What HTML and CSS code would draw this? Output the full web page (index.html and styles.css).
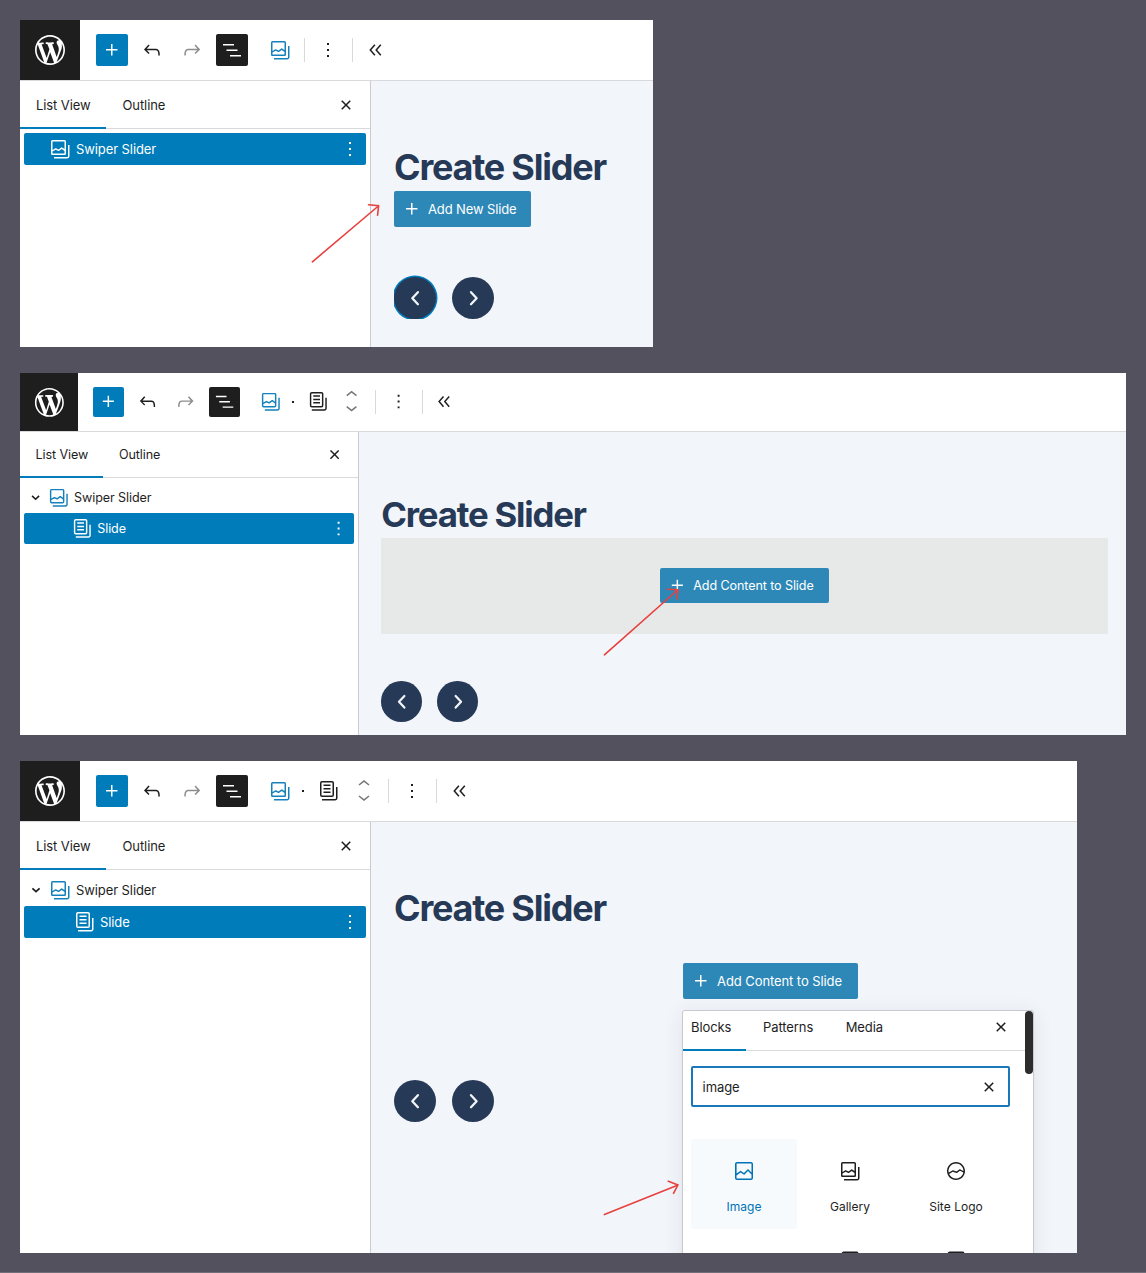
FILE: index.html
```html
<!DOCTYPE html>
<html lang="en">
<head>
<meta charset="utf-8">
<title>Swiper Slider block</title>
<link rel="stylesheet" href="styles.css">
</head>
<body>
<svg class="sprite" aria-hidden="true">
  <symbol id="wordpress" viewBox="-2 -2 24 24"><path d="M20 10c0-5.51-4.49-10-10-10C4.48 0 0 4.49 0 10c0 5.52 4.48 10 10 10 5.51 0 10-4.48 10-10zM7.78 15.37L4.37 6.22c.55-.02 1.17-.08 1.17-.08.5-.06.44-1.13-.06-1.11 0 0-1.45.11-2.37.11-.18 0-.37 0-.58-.01C4.12 2.69 6.87 1.11 10 1.11c2.33 0 4.45.87 6.05 2.34-.68-.11-1.65.39-1.65 1.58 0 .74.45 1.36.9 2.1.35.61.55 1.36.55 2.46 0 1.49-1.4 5-1.4 5l-3.03-8.37c.54-.02.82-.17.82-.17.5-.05.44-1.25-.06-1.22 0 0-1.44.12-2.38.12-.87 0-2.33-.12-2.33-.12-.5-.03-.56 1.2-.06 1.22l.92.08 1.26 3.41zM17.41 10c.24-.64.74-1.87.43-4.25.7 1.29 1.05 2.71 1.05 4.25 0 3.29-1.73 6.24-4.4 7.78.97-2.59 1.94-5.2 2.92-7.78zM6.1 18.09C3.12 16.65 1.11 13.53 1.11 10c0-1.3.23-2.48.72-3.59C3.25 10.3 4.67 14.2 6.1 18.09zm4.03-6.63l2.58 6.98c-.86.29-1.76.45-2.71.45-.79 0-1.57-.11-2.29-.33.81-2.38 1.62-4.74 2.42-7.1z"/></symbol>
  <symbol id="plus" viewBox="0 0 24 24"><path d="M11 12.5V17.5H12.5V12.5H17.5V11H12.5V6H11V11H6V12.5H11Z"/></symbol>
  <symbol id="undo" viewBox="0 0 24 24"><path d="M18.3 11.7c-.6-.6-1.4-.9-2.3-.9H6.7l2.9-3.3-1.1-1-4.5 5L8.5 16l1-1-2.7-2.7H16c.5 0 .9.2 1.3.5 1 1 1 3.4 1 4.5v.3h1.5v-.2c0-1.5 0-4.3-1.5-5.7z"/></symbol>
  <symbol id="redo" viewBox="0 0 24 24"><path d="M15.6 6.5l-1.1 1 2.9 3.3H8c-.9 0-1.7.3-2.3.9-1.4 1.5-1.4 4.2-1.4 5.6v.2h1.5v-.3c0-1.1 0-3.5 1-4.5.3-.3.7-.5 1.3-.5h9.2L14.5 15l1.1 1.1 4.6-4.6-4.6-5z"/></symbol>
  <symbol id="list-view" viewBox="0 0 24 24"><path d="M3 6h11v1.5H3V6Zm3.5 5.5h11V13h-11v-1.5ZM21 17H10v1.5h11V17Z"/></symbol>
  <symbol id="gallery" viewBox="0 0 24 24"><path fill-rule="evenodd" d="M16.375 4.5H4.625a.125.125 0 0 0-.125.125v8.254l2.859-1.54a.75.75 0 0 1 .68-.016l2.384 1.142 2.89-2.074a.75.75 0 0 1 .874 0l2.313 1.66V4.625a.125.125 0 0 0-.125-.125Zm.125 9.398-2.75-1.975-2.813 2.02a.75.75 0 0 1-.76.067l-2.444-1.17L4.5 14.583v1.792c0 .069.056.125.125.125h11.75a.125.125 0 0 0 .125-.125v-2.477ZM4.625 3C3.728 3 3 3.728 3 4.625v11.75C3 17.273 3.728 18 4.625 18h11.75c.898 0 1.625-.727 1.625-1.625V4.625C18 3.728 17.273 3 16.375 3H4.625ZM20 8v11c0 .69-.31 1-.999 1H6v1.5h13.001c1.52 0 2.499-.982 2.499-2.5V8H20Z"/></symbol>
  <symbol id="pages" viewBox="0 0 24 24"><path d="M14.5 5.5h-7V7h7V5.5ZM7.5 9h7v1.5h-7V9Zm7 3.5h-7V14h7v-1.5Z"/><path d="M16 2H6a2 2 0 0 0-2 2v12a2 2 0 0 0 2 2h10a2 2 0 0 0 2-2V4a2 2 0 0 0-2-2ZM6 3.5h10a.5.5 0 0 1 .5.5v12a.5.5 0 0 1-.5.5H6a.5.5 0 0 1-.5-.5V4a.5.5 0 0 1 .5-.5Z" fill-rule="evenodd"/><path d="M20 8v11c0 .69-.31 1-.999 1H6v1.5h13.001c1.52 0 2.499-.982 2.499-2.5V8H20Z"/></symbol>
  <symbol id="more" viewBox="0 0 24 24"><path d="M13 19h-2v-2h2v2zm0-6h-2v-2h2v2zm0-6h-2V5h2v2z"/></symbol>
  <symbol id="collapse" viewBox="0 0 24 24"><path d="M10.9 6.7 6.3 12l4.6 5.3M16.8 6.7 12.2 12l4.6 5.3" fill="none" stroke="currentColor" stroke-width="1.5"/></symbol>
  <symbol id="chevron-up" viewBox="0 0 24 24"><path d="M6.5 12.4L12 8l5.5 4.4-.9 1.2L12 10l-4.5 3.6-1-1.2z"/></symbol>
  <symbol id="chevron-down" viewBox="0 0 24 24"><path d="M17.5 11.6L12 16l-5.5-4.4.9-1.2L12 14l4.5-3.6 1 1.2z"/></symbol>
  <symbol id="close" viewBox="0 0 24 24"><path d="M12 13.06l3.712 3.713 1.061-1.06L13.061 12l3.712-3.712-1.06-1.06L12 10.938 8.288 7.227l-1.061 1.06L10.939 12l-3.712 3.712 1.06 1.061L12 13.061z"/></symbol>
  <symbol id="expanded" viewBox="0 0 24 24"><path d="m8.4 10.3 3.6 3.4 3.6-3.4" fill="none" stroke="currentColor" stroke-width="1.7"/></symbol>
  <symbol id="image" viewBox="0 0 24 24"><path d="M19 3H5c-1.1 0-2 .9-2 2v14c0 1.1.9 2 2 2h14c1.1 0 2-.9 2-2V5c0-1.1-.9-2-2-2zM5 4.5h14c.3 0 .5.2.5.5v8.4l-3-2.9c-.3-.3-.8-.3-1 0L11.9 14 9 12c-.3-.2-.6-.2-.8 0l-3.6 2.6V5c-.1-.3.1-.5.4-.5zm14 15H5c-.3 0-.5-.2-.5-.5v-2.4l4.1-3 3 1.9c.3.2.7.2.9-.1L16 12l3.5 3.4V19c0 .3-.2.5-.5.5z"/></symbol>
  <symbol id="site-logo" viewBox="0 0 24 24"><path d="M12 3c-5 0-9 4-9 9s4 9 9 9 9-4 9-9-4-9-9-9zm0 1.5c4.1 0 7.5 3.4 7.5 7.5v.1c-1.4-.8-3.3-1.7-3.4-1.8-.2-.1-.5-.1-.8.1l-2.9 2.1L9 11.3c-.2-.1-.4 0-.6.1l-3.7 2.2c-.1-.5-.2-1-.2-1.5 0-4.2 3.4-7.6 7.5-7.6zm0 15c-3.1 0-5.7-1.9-6.9-4.5l3.7-2.2 3.5 1.2c.2.1.5 0 .7-.1l2.9-2.1c.8.4 2.5 1.2 3.5 1.9-.9 3.3-3.9 5.8-7.4 5.8z"/></symbol>
  <symbol id="frame" viewBox="0 0 24 24"><rect x="4.2" y="3.3" width="15.6" height="17" rx="1.5" fill="none" stroke="currentColor" stroke-width="1.5"/></symbol>
  <symbol id="prev" viewBox="0 0 24 24"><path d="M14.9 6.2 9.3 12.2l5.6 6" fill="none" stroke="currentColor" stroke-width="2.3" stroke-linecap="round" stroke-linejoin="round"/></symbol>
  <symbol id="next" viewBox="0 0 24 24"><path d="M10 6.2l5.6 6-5.6 6" fill="none" stroke="currentColor" stroke-width="2.3" stroke-linecap="round" stroke-linejoin="round"/></symbol>
</svg>

<main class="steps">
  <section class="editor editor-empty">
    <header class="toolbar">
      <div class="logo"><svg><use href="#wordpress"/></svg></div>
      <div class="tools">
        <span class="tool tool-add"><svg><use href="#plus"/></svg></span>
        <span class="tool"><svg><use href="#undo"/></svg></span>
        <span class="tool muted"><svg><use href="#redo"/></svg></span>
        <span class="tool tool-list"><svg><use href="#list-view"/></svg></span>
      </div>
      <div class="block-tools">
        <svg class="accent"><use href="#gallery"/></svg>
        <i class="rule"></i>
        <svg><use href="#more"/></svg>
        <i class="rule"></i>
        <svg><use href="#collapse"/></svg>
      </div>
    </header>
    <div class="workspace">
      <aside class="sidebar">
        <nav class="tabs"><span class="tab active">List View</span><span class="tab">Outline</span><svg class="close"><use href="#close"/></svg></nav>
        <div class="tree">
          <div class="row selected"><span class="toggle"></span><svg><use href="#gallery"/></svg><span class="name">Swiper Slider</span><svg class="row-more"><use href="#more"/></svg></div>
        </div>
      </aside>
      <div class="canvas">
        <h1>Create Slider</h1>
        <div><span class="button"><svg><use href="#plus"/></svg>Add New Slide</span></div>
        <div class="arrows"><span class="arrow-clip"><span class="arrow focused"><svg><use href="#prev"/></svg></span></span><span class="arrow"><svg><use href="#next"/></svg></span></div>
      </div>
    </div>
  </section>

  <section class="editor editor-slide">
    <header class="toolbar">
      <div class="logo"><svg><use href="#wordpress"/></svg></div>
      <div class="tools">
        <span class="tool tool-add"><svg><use href="#plus"/></svg></span>
        <span class="tool"><svg><use href="#undo"/></svg></span>
        <span class="tool muted"><svg><use href="#redo"/></svg></span>
        <span class="tool tool-list"><svg><use href="#list-view"/></svg></span>
      </div>
      <div class="block-tools">
        <svg class="accent"><use href="#gallery"/></svg>
        <span class="crumb"></span>
        <svg class="page-icon"><use href="#pages"/></svg>
        <span class="mover"><svg><use href="#chevron-up"/></svg><svg><use href="#chevron-down"/></svg></span>
        <i class="rule"></i>
        <svg><use href="#more"/></svg>
        <i class="rule"></i>
        <svg><use href="#collapse"/></svg>
      </div>
    </header>
    <div class="workspace">
      <aside class="sidebar">
        <nav class="tabs"><span class="tab active">List View</span><span class="tab">Outline</span><svg class="close"><use href="#close"/></svg></nav>
        <div class="tree">
          <div class="row"><svg class="toggle"><use href="#expanded"/></svg><svg class="accent"><use href="#gallery"/></svg><span class="name">Swiper Slider</span></div>
          <div class="row selected child"><svg><use href="#pages"/></svg><span class="name">Slide</span><svg class="row-more"><use href="#more"/></svg></div>
        </div>
      </aside>
      <div class="canvas">
        <h1>Create Slider</h1>
        <div class="slide filled"><span class="button"><svg><use href="#plus"/></svg>Add Content to Slide</span></div>
        <div class="arrows"><span class="arrow"><svg><use href="#prev"/></svg></span><span class="arrow"><svg><use href="#next"/></svg></span></div>
      </div>
    </div>
  </section>

  <section class="editor editor-inserter">
    <header class="toolbar">
      <div class="logo"><svg><use href="#wordpress"/></svg></div>
      <div class="tools">
        <span class="tool tool-add"><svg><use href="#plus"/></svg></span>
        <span class="tool"><svg><use href="#undo"/></svg></span>
        <span class="tool muted"><svg><use href="#redo"/></svg></span>
        <span class="tool tool-list"><svg><use href="#list-view"/></svg></span>
      </div>
      <div class="block-tools">
        <svg class="accent"><use href="#gallery"/></svg>
        <span class="crumb"></span>
        <svg class="page-icon"><use href="#pages"/></svg>
        <span class="mover"><svg><use href="#chevron-up"/></svg><svg><use href="#chevron-down"/></svg></span>
        <i class="rule"></i>
        <svg><use href="#more"/></svg>
        <i class="rule"></i>
        <svg><use href="#collapse"/></svg>
      </div>
    </header>
    <div class="workspace">
      <aside class="sidebar">
        <nav class="tabs"><span class="tab active">List View</span><span class="tab">Outline</span><svg class="close"><use href="#close"/></svg></nav>
        <div class="tree">
          <div class="row"><svg class="toggle"><use href="#expanded"/></svg><svg class="accent"><use href="#gallery"/></svg><span class="name">Swiper Slider</span></div>
          <div class="row selected child"><svg><use href="#pages"/></svg><span class="name">Slide</span><svg class="row-more"><use href="#more"/></svg></div>
        </div>
      </aside>
      <div class="canvas">
        <h1>Create Slider</h1>
        <div class="slide"><span class="button"><svg><use href="#plus"/></svg>Add Content to Slide</span></div>
        <div class="arrows"><span class="arrow"><svg><use href="#prev"/></svg></span><span class="arrow"><svg><use href="#next"/></svg></span></div>
        <div class="inserter">
          <div class="inserter-body">
            <nav class="inserter-tabs"><span class="active">Blocks</span><span>Patterns</span><span>Media</span><svg class="close"><use href="#close"/></svg></nav>
            <div class="search"><span>image</span><svg><use href="#close"/></svg></div>
            <div class="blocks">
              <div class="block current"><svg><use href="#image"/></svg><span>Image</span></div>
              <div class="block"><svg><use href="#gallery"/></svg><span>Gallery</span></div>
              <div class="block"><svg><use href="#site-logo"/></svg><span>Site Logo</span></div>
              <div class="block"></div>
              <div class="block"><svg><use href="#frame"/></svg></div>
              <div class="block"><svg><use href="#frame"/></svg></div>
            </div>
          </div>
          <div class="scroll-thumb"></div>
        </div>
      </div>
    </div>
  </section>
</main>

<svg class="pointers" viewBox="0 0 1146 1273" aria-hidden="true">
  <path d="M312.4 261.8 378.4 206M368.5 204.8 378.6 205.8 377.6 215.2"/>
  <path d="M604.4 654.8 677.6 590M667.5 589.2 678 589.8 676.8 599.2"/>
  <path d="M604.4 1214.6 677.5 1185.2M668.3 1181.2 677.9 1185 673.5 1193.4"/>
</svg>
</body>
</html>
```

FILE: styles.css
```css
:root {
  --blue: #007cba;
  --ink: #1e1e1e;
  --navy: #263956;
  --line: #d9d9dc;
}

* { box-sizing: border-box; }

body {
  position: relative;
  margin: 0;
  width: 1146px;
  height: 1273px;
  overflow: hidden;
  background: #54515e;
  border-bottom: 1px solid #706e79;
  color: var(--ink);
  font: 13px/20px Inter, "Liberation Sans", sans-serif;
  letter-spacing: -.09px;
  white-space: nowrap;
}

svg {
  display: block;
  flex: none;
  width: 24px;
  height: 24px;
  fill: currentColor;
}

.sprite { position: absolute; width: 0; height: 0; }

.steps {
  display: flex;
  flex-direction: column;
  align-items: flex-start;
  gap: 26px;
  padding: 20px;
}

.editor {
  display: flex;
  flex-direction: column;
  overflow: hidden;
  background: #fff;
}
.editor-empty { width: 633px; height: 327px; }
.editor-slide { width: 1145.3px; height: 374.9px; zoom: .9657; }
.editor-inserter { width: 1057px; height: 492px; }

.toolbar { display: flex; flex: none; height: 60px; }

.logo {
  display: grid;
  place-items: center;
  width: 60px;
  height: 60px;
  background: var(--ink);
  color: #fff;
}
.logo svg { width: 36px; height: 36px; }

.tools {
  display: flex;
  align-items: center;
  gap: 8px;
  padding-left: 16px;
}
.tool {
  display: grid;
  place-items: center;
  width: 32px;
  height: 32px;
  border-radius: 2px;
}
.tool-add { background: var(--blue); color: #fff; }
.tool-list { background: var(--ink); color: #fff; }
.muted { color: #8d8d8d; }
.accent { color: #1481bc; }

.block-tools {
  display: flex;
  align-items: center;
  padding-left: 20px;
}
.rule { width: 1px; height: 24px; margin: 0 11px 0 12px; background: var(--line); }
.crumb { width: 2px; height: 2px; margin: 0 12px 0 10px; background: var(--ink); }
.mover {
  display: flex;
  flex-direction: column;
  margin: 0 0 2px 12px;
  color: #777;
}
.mover svg + svg { margin-top: -11px; }

.workspace {
  display: flex;
  flex: 1;
  min-height: 0;
  border-top: 1px solid var(--line);
}

.sidebar { flex: none; width: 351px; border-right: 1px solid #c9cbd0; }

.tabs {
  display: flex;
  align-items: stretch;
  height: 48px;
  border-bottom: 1px solid var(--line);
}
.tab { height: 48px; padding: 0 16px; line-height: 48px; }
.tab.active { width: 86px; border-bottom: 2px solid var(--blue); }
.editor-slide .tab.active { border-bottom-width: 2.2px; }
.tab + .tab { padding-left: 16.5px; }
.tabs .close { margin: 12px 12px 0 auto; }
.editor-slide .tabs .close { margin-top: 11.5px; }

.tree { padding: 4px; }
.row {
  display: flex;
  align-items: center;
  height: 32px;
  border-radius: 2px;
}
.row.selected { background: var(--blue); color: #fff; }
.row.child { padding-left: 48px; }
.toggle { width: 24px; }
.name { margin-left: 4px; }
.row-more { margin-left: auto; margin-right: 4px; }

.canvas {
  position: relative;
  flex: 1;
  min-width: 0;
  padding-left: 23px;
  background: #f2f5fa;
}

h1 {
  margin: 0;
  height: 110px;
  padding-top: 62px;
  color: var(--navy);
  font-size: 36px;
  font-weight: 700;
  line-height: 48px;
  letter-spacing: -1.22px;
}
.editor-slide h1 { padding-top: 61px; }

.button {
  display: inline-flex;
  align-items: center;
  gap: 4px;
  height: 36px;
  padding: 0 16px 0 6px;
  border-radius: 2px;
  background: #2d88b8;
  color: #fff;
  vertical-align: top;
}
.editor-empty .button { padding-right: 15px; letter-spacing: -.13px; }

.slide {
  display: flex;
  justify-content: center;
  align-items: flex-start;
  width: 753px;
  height: 99px;
  padding-top: 31px;
}
.slide.filled { background: #e7e9e8; }

.arrows { display: flex; gap: 16px; padding-top: 49px; }
.arrow {
  display: grid;
  place-items: center;
  width: 42px;
  height: 42px;
  border-radius: 50%;
  background: var(--navy);
  color: #f1f5fa;
}
.arrow-clip { margin: -2px -2px 0 0; padding: 2px 2px 0 0; overflow: hidden; }
.arrow.focused { box-shadow: 0 0 0 1.5px var(--blue); }
.editor-empty .arrows { padding-top: 49.5px; }

.inserter {
  position: absolute;
  left: 311px;
  top: 188px;
  display: flex;
  width: 352px;
  height: 300px;
  border: 1px solid #c8c9cd;
  border-radius: 3px;
  background: #fff;
  box-shadow: 0 3px 20px rgba(40, 50, 70, .09);
}
.inserter-body { width: 342px; }
.inserter-tabs {
  display: flex;
  height: 40px;
  border-bottom: 1px solid var(--line);
  line-height: 32px;
}
.inserter-tabs span { height: 40px; margin-right: 16.5px; padding: 0 8px; }
.inserter-tabs .active { width: 63px; margin-right: 9px; border-bottom: 2px solid var(--blue); }
.inserter-tabs .close { margin: 3.5px 12px 0 auto; }

.search {
  display: flex;
  align-items: center;
  justify-content: space-between;
  width: 319px;
  height: 41px;
  margin: 15px 0 0 7.6px;
  padding: 0 7px 0 10px;
  border: 2px solid #1a78ba;
  border-radius: 2px;
}

.blocks {
  display: grid;
  grid-template-columns: repeat(3, 106px);
  grid-auto-rows: 90px;
  margin: 32px 0 0 8px;
  font-size: 12px;
  letter-spacing: .03px;
}
.block {
  display: flex;
  flex-direction: column;
  align-items: center;
  gap: 14px;
  padding-top: 20px;
  border-radius: 2px;
}
.block.current { background: #f6fafd; color: #0073b8; }

.scroll-thumb { width: 8px; height: 63px; border-radius: 4px; background: #2c2c2c; }

.pointers {
  position: absolute;
  top: 0;
  left: 0;
  width: 1146px;
  height: 1273px;
  fill: none;
  stroke: #e8413f;
  stroke-width: 1.6;
  stroke-linecap: round;
  pointer-events: none;
}
```
